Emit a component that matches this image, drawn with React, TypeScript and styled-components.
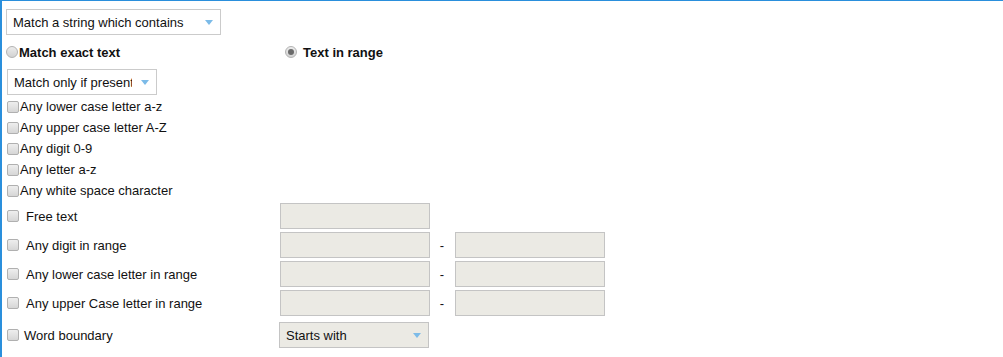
import React from "react";
import styled, { createGlobalStyle } from "styled-components";

const GlobalStyle = createGlobalStyle`
  html, body {
    margin: 0;
    padding: 0;
    background: #ffffff;
  }
  body {
    font-family: "Liberation Sans", Arial, sans-serif;
    font-size: 13px;
    color: #111111;
  }
`;

const Frame = styled.div`
  box-sizing: border-box;
  width: 1003px;
  height: 357px;
  border-top: 1px solid #2a8fdc;
  border-left: 2px solid #2a8fdc;
  padding: 8px 0 0 4px;
  overflow: hidden;
`;

const SelectBox = styled.div<{ $width: number; $filled?: boolean }>`
  position: relative;
  box-sizing: border-box;
  width: ${(p) => p.$width}px;
  height: 26px;
  border: 1px solid ${(p) => (p.$filled ? "#c4c4c4" : "#cbcbcb")};
  background: ${(p) => (p.$filled ? "#ebeae4" : "#ffffff")};
  display: flex;
  align-items: center;
  padding: 0 24px 0 6px;
  font-size: 13px;
  color: #111;
`;

const SelectText = styled.span`
  flex: 1;
  white-space: nowrap;
  overflow: hidden;
`;

const Arrow = styled.span`
  position: absolute;
  right: 7px;
  top: 10px;
  width: 0;
  height: 0;
  border-left: 4px solid transparent;
  border-right: 4px solid transparent;
  border-top: 5px solid #7cbbe8;
`;

const RadioRow = styled.div`
  display: flex;
  align-items: center;
  height: 20px;
  margin-top: 7px;
`;

const RadioGroup = styled.label<{ $width?: number; $gap: number }>`
  display: flex;
  align-items: center;
  gap: ${(p) => p.$gap}px;
  width: ${(p) => (p.$width ? `${p.$width}px` : "auto")};
  font-weight: bold;
  font-size: 13px;
`;

const Radio = styled.span<{ $checked?: boolean }>`
  position: relative;
  box-sizing: border-box;
  width: 12px;
  height: 12px;
  border-radius: 50%;
  border: 1px solid #b3b3b3;
  background: linear-gradient(#ececec, #d2d2d2);
  &::after {
    content: "";
    display: ${(p) => (p.$checked ? "block" : "none")};
    position: absolute;
    left: 2px;
    top: 2px;
    width: 6px;
    height: 6px;
    border-radius: 50%;
    background: #6a6a6a;
  }
`;

const SubSelect = styled.div`
  margin: 7px 0 0 1px;
`;

const CheckList = styled.div`
  display: flex;
  flex-direction: column;
  margin: 1px 0 0 1px;
`;

const CheckItem = styled.label<{ $gap: number }>`
  display: flex;
  align-items: center;
  gap: ${(p) => p.$gap}px;
  height: 21px;
  font-size: 13px;
  color: #111;
`;

const Box = styled.span`
  box-sizing: border-box;
  width: 12px;
  height: 12px;
  border-radius: 2px;
  border: 1px solid #b0b0b0;
  background: linear-gradient(#eeeeee, #d6d6d6);
  flex-shrink: 0;
`;

const RangeGrid = styled.div`
  display: grid;
  grid-template-columns: 273px 150px 25px 150px;
  grid-auto-rows: 26px;
  row-gap: 3px;
  margin: 2px 0 0 1px;
  align-items: center;
`;

const Field = styled.div`
  box-sizing: border-box;
  height: 26px;
  border: 1px solid #c4c4c4;
  background: #ebeae4;
`;

const Dash = styled.span`
  text-align: center;
  font-size: 13px;
  padding-right: 1px;
`;

const BoundaryRow = styled.div`
  display: grid;
  grid-template-columns: 272px 150px;
  align-items: center;
  margin: 6px 0 0 1px;
  height: 26px;
`;

const ranges = [
  { label: "Any digit in range" },
  { label: "Any lower case letter in range" },
  { label: "Any upper Case letter in range" },
];

const simpleChecks = [
  "Any lower case letter a-z",
  "Any upper case letter A-Z",
  "Any digit 0-9",
  "Any letter a-z",
  "Any white space character",
];

function App() {
  return (
    <Frame>
      <GlobalStyle />
      <SelectBox $width={215}>
        <SelectText>Match a string which contains</SelectText>
        <Arrow />
      </SelectBox>
      <RadioRow>
        <RadioGroup $width={279} $gap={1}>
          <Radio />
          Match exact text
        </RadioGroup>
        <RadioGroup $gap={6}>
          <Radio $checked />
          Text in range
        </RadioGroup>
      </RadioRow>
      <SubSelect>
        <SelectBox $width={150}>
          <SelectText>Match only if present</SelectText>
          <Arrow />
        </SelectBox>
      </SubSelect>
      <CheckList>
        {simpleChecks.map((c) => (
          <CheckItem key={c} $gap={1}>
            <Box />
            {c}
          </CheckItem>
        ))}
      </CheckList>
      <RangeGrid>
        <CheckItem $gap={7}>
          <Box />
          Free text
        </CheckItem>
        <Field />
        <span />
        <span />
        {ranges.map((r) => (
          <React.Fragment key={r.label}>
            <CheckItem $gap={7}>
              <Box />
              {r.label}
            </CheckItem>
            <Field />
            <Dash>-</Dash>
            <Field />
          </React.Fragment>
        ))}
      </RangeGrid>
      <BoundaryRow>
        <CheckItem $gap={5}>
          <Box />
          Word boundary
        </CheckItem>
        <SelectBox $width={150} $filled>
          <SelectText>Starts with</SelectText>
          <Arrow />
        </SelectBox>
      </BoundaryRow>
    </Frame>
  );
}

export default App;
